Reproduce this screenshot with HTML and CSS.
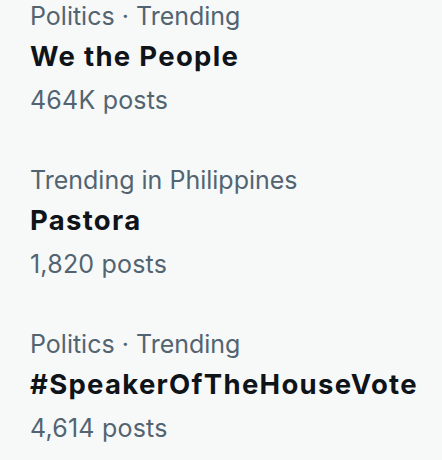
FILE: index.html
```html
<!DOCTYPE html>
<html>
<head>
<meta charset="utf-8">
<link rel="stylesheet" href="styles.css">
</head>
<body>
<div class="trends">
  <div class="trend">
    <div class="meta">Politics · Trending</div>
    <div class="title">We the People</div>
    <div class="count">464K posts</div>
  </div>
  <div class="trend">
    <div class="meta">Trending in Philippines</div>
    <div class="title">Pastora</div>
    <div class="count">1,820 posts</div>
  </div>
  <div class="trend">
    <div class="meta">Politics · Trending</div>
    <div class="title">#SpeakerOfTheHouseVote</div>
    <div class="count">4,614 posts</div>
  </div>
</div>
</body>
</html>
```
FILE: styles.css
```css
html, body {
  margin: 0;
  padding: 0;
  background: #f7f9f9;
}
body {
  font-family: Inter, "Noto Sans", sans-serif;
  width: 442px;
  height: 460px;
  overflow: hidden;
}
.trends {
  margin-top: -25px;
}
.trend {
  padding: 27px 30px 25px;
  display: flex;
  flex-direction: column;
}
.meta, .count {
  color: #536471;
  font-size: 25px;
  line-height: 28px;
}
.count {
  margin-top: 10px;
  letter-spacing: 0.2px;
}
.title {
  color: #0f1419;
  font-size: 27.5px;
  font-weight: 700;
  line-height: 40px;
  margin-top: 6px;
  letter-spacing: 1.3px;
}
```
